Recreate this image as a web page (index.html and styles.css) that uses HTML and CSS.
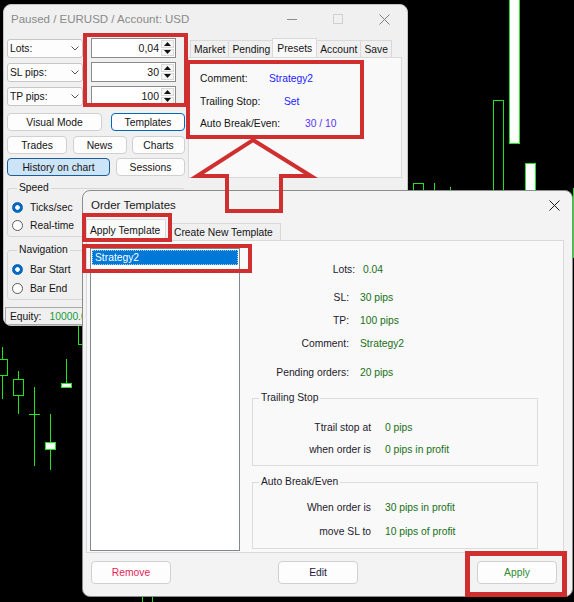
FILE: index.html
```html
<!DOCTYPE html>
<html lang="en">
<head>
<meta charset="utf-8">
<title>Order Templates</title>
<link rel="stylesheet" href="styles.css">
</head>
<body>
<div class="desktop">
  <svg class="chart" width="574" height="602" viewBox="0 0 574 602">
    <g stroke="#1ee61e" stroke-width="1" shape-rendering="crispEdges">
      <rect x="413.5" y="183.5" width="10" height="20" fill="#000"/>
      <line x1="434.5" y1="183" x2="434.5" y2="200"/>
      <line x1="450.5" y1="187" x2="450.5" y2="200"/>
      <rect x="493.5" y="100.5" width="10" height="100" fill="#000"/>
      <rect x="509.5" y="-2" width="10" height="145.5" fill="#fff"/>
      <rect x="525.5" y="163.5" width="10" height="40" fill="#fff"/>
      <line x1="573.5" y1="188" x2="573.5" y2="258"/>
      <line x1="2.5" y1="347" x2="2.5" y2="399"/>
      <rect x="-3.5" y="359.5" width="11" height="16" fill="#000"/>
      <line x1="18.5" y1="371" x2="18.5" y2="414"/>
      <rect x="13.5" y="379.5" width="10" height="16" fill="#000"/>
      <line x1="34.5" y1="387" x2="34.5" y2="466"/>
      <line x1="29" y1="414.5" x2="40" y2="414.5"/>
      <line x1="50.5" y1="414" x2="50.5" y2="470"/>
      <rect x="45.5" y="442.5" width="10" height="7" fill="#fff"/>
      <line x1="66.5" y1="359" x2="66.5" y2="385"/>
      <rect x="61.5" y="383.5" width="10" height="4" fill="#fff"/>
      <rect x="78.5" y="300" width="10" height="44.5" fill="#000"/>
      <line x1="142.5" y1="596" x2="142.5" y2="602"/>
      <line x1="152.5" y1="596" x2="152.5" y2="602"/>
    </g>
  </svg>

  <section class="win win-main">
    <header class="titlebar main-titlebar">
      <span class="title title-inactive">Paused / EURUSD / Account: USD</span>
      <span class="cap-btn"><svg width="10" height="10" viewBox="0 0 10 10"><line x1="0" y1="5.5" x2="10" y2="5.5" stroke="#8d8d8d"/></svg></span>
      <span class="cap-btn"><svg width="10" height="10" viewBox="0 0 10 10"><rect x="0.5" y="0.5" width="9" height="9" fill="none" stroke="#cfcfcf"/></svg></span>
      <span class="cap-btn"><svg width="11" height="11" viewBox="0 0 11 11"><path d="M0.5 0.5L10.5 10.5M10.5 0.5L0.5 10.5" stroke="#7d7d7d" fill="none"/></svg></span>
    </header>
    <div class="main-body">
      <div class="left-col">
        <div class="param-row">
          <div class="combo"><span>Lots:</span><svg class="chev" width="8" height="5" viewBox="0 0 8 5"><polyline points="0.5,0.5 4,4 7.5,0.5" fill="none" stroke="#555"/></svg></div>
          <div class="numeric"><span class="num-val">0,04</span><span class="spin"><span><svg width="7" height="4" viewBox="0 0 7 4"><polygon points="0,4 3.5,0 7,4" fill="#111"/></svg></span><span><svg width="7" height="4" viewBox="0 0 7 4"><polygon points="0,0 7,0 3.5,4" fill="#111"/></svg></span></span></div>
        </div>
        <div class="param-row">
          <div class="combo"><span>SL pips:</span><svg class="chev" width="8" height="5" viewBox="0 0 8 5"><polyline points="0.5,0.5 4,4 7.5,0.5" fill="none" stroke="#555"/></svg></div>
          <div class="numeric"><span class="num-val">30</span><span class="spin"><span><svg width="7" height="4" viewBox="0 0 7 4"><polygon points="0,4 3.5,0 7,4" fill="#111"/></svg></span><span><svg width="7" height="4" viewBox="0 0 7 4"><polygon points="0,0 7,0 3.5,4" fill="#111"/></svg></span></span></div>
        </div>
        <div class="param-row">
          <div class="combo"><span>TP pips:</span><svg class="chev" width="8" height="5" viewBox="0 0 8 5"><polyline points="0.5,0.5 4,4 7.5,0.5" fill="none" stroke="#555"/></svg></div>
          <div class="numeric"><span class="num-val">100</span><span class="spin"><span><svg width="7" height="4" viewBox="0 0 7 4"><polygon points="0,4 3.5,0 7,4" fill="#111"/></svg></span><span><svg width="7" height="4" viewBox="0 0 7 4"><polygon points="0,0 7,0 3.5,4" fill="#111"/></svg></span></span></div>
        </div>

        <div class="btn-row row-1">
          <button class="btn w-visual">Visual Mode</button>
          <button class="btn btn-focus w-templates">Templates</button>
        </div>
        <div class="btn-row row-2">
          <button class="btn w-trades">Trades</button>
          <button class="btn w-news">News</button>
          <button class="btn w-charts">Charts</button>
        </div>
        <div class="btn-row row-3">
          <button class="btn btn-pressed w-history">History on chart</button>
          <button class="btn w-sessions">Sessions</button>
        </div>

        <fieldset class="group group-speed">
          <legend>Speed</legend>
          <div class="radio-row"><span class="radio on"></span>Ticks/sec</div>
          <div class="radio-row"><span class="radio"></span>Real-time</div>
        </fieldset>
        <fieldset class="group group-nav">
          <legend>Navigation</legend>
          <div class="radio-row"><span class="radio on"></span>Bar Start</div>
          <div class="radio-row"><span class="radio"></span>Bar End</div>
        </fieldset>
        <div class="equity"><span>Equity:</span><span class="equity-val">10000.00</span></div>
      </div>

      <div class="right-col">
        <div class="tabs">
          <span class="tab">Market</span>
          <span class="tab">Pending</span>
          <span class="tab tab-sel">Presets</span>
          <span class="tab">Account</span>
          <span class="tab">Save</span>
        </div>
        <div class="tab-panel">
          <div class="preset-row"><span class="pl pl-comment">Comment:</span><span class="pv">Strategy2</span></div>
          <div class="preset-row"><span class="pl pl-trail">Trailing Stop:</span><span class="pv">Set</span></div>
          <div class="preset-row"><span class="pl pl-auto">Auto Break/Even:</span><span class="pv pv-purple">30 / 10</span></div>
        </div>
      </div>
    </div>
  </section>

  <section class="win win-dialog">
    <header class="titlebar dlg-titlebar">
      <span class="title title-active">Order Templates</span>
      <span class="dlg-close"><svg width="11" height="11" viewBox="0 0 11 11"><path d="M0.5 0.5L10.5 10.5M10.5 0.5L0.5 10.5" stroke="#1a1a1a" fill="none"/></svg></span>
    </header>
    <div class="dlg-tabs">
      <span class="dtab dtab-sel">Apply Template</span>
      <span class="dtab dtab-create">Create New Template</span>
    </div>
    <div class="dlg-page">
      <div class="tpl-list">
        <div class="tpl-item tpl-sel">Strategy2</div>
      </div>
      <div class="details">
        <div class="det-lots"><span class="dl">Lots:</span><span class="dv">0.04</span></div>
        <div class="det-row r-sl"><span class="dl">SL:</span><span class="dv">30 pips</span></div>
        <div class="det-row r-tp"><span class="dl">TP:</span><span class="dv">100 pips</span></div>
        <div class="det-row r-comment"><span class="dl">Comment:</span><span class="dv">Strategy2</span></div>
        <div class="det-row r-pending"><span class="dl">Pending orders:</span><span class="dv">20 pips</span></div>
        <fieldset class="dgroup g-trail">
          <legend>Trailing Stop</legend>
          <div class="grow"><span class="dl">Ttrail stop at</span><span class="dv">0 pips</span></div>
          <div class="grow"><span class="dl">when order is</span><span class="dv">0 pips in profit</span></div>
        </fieldset>
        <fieldset class="dgroup g-auto">
          <legend>Auto Break/Even</legend>
          <div class="grow"><span class="dl">When order is</span><span class="dv">30 pips in profit</span></div>
          <div class="grow"><span class="dl">move SL to</span><span class="dv">10 pips of profit</span></div>
        </fieldset>
      </div>
    </div>
    <div class="dlg-buttons">
      <button class="dbtn btn-remove">Remove</button>
      <button class="dbtn btn-edit">Edit</button>
      <button class="dbtn btn-apply">Apply</button>
    </div>
  </section>

  <div class="mark mark-params"></div>
  <div class="mark mark-presets"></div>
  <div class="mark mark-tab"></div>
  <div class="mark mark-list"></div>
  <div class="mark mark-apply"></div>
  <svg class="arrow-overlay" width="574" height="602" viewBox="0 0 574 602">
    <polygon points="253,140 311,176 281,176 281,211 227,211 227,176 197,176" fill="none" stroke="#cf2f2f" stroke-width="4" stroke-linejoin="miter"/>
  </svg>
</div>
</body>
</html>
```

FILE: styles.css
```css
* { box-sizing: border-box; }
html, body { margin: 0; padding: 0; }
body {
  background: #000;
  font-family: "Liberation Sans", Arial, sans-serif;
  font-size: 10.3px;
  color: #141414;
  white-space: nowrap;
}
button { font: inherit; color: inherit; padding: 0; margin: 0; cursor: default; white-space: nowrap; }
fieldset { min-width: 0; }

.desktop { position: relative; width: 574px; height: 602px; overflow: hidden; }
.chart { position: absolute; left: 0; top: 0; }

/* windows */
.win { position: absolute; display: flex; flex-direction: column; border-radius: 8px; overflow: hidden; }
.win-main { left: 3px; top: 4px; width: 405px; height: 322px; background: #f0f0f0; border: 1px solid #c4c4c4; }
.win-dialog { left: 82px; top: 190px; width: 491px; height: 407px; background: #f3f3f3; border: 1px solid #8c8c8c; }

.titlebar { flex: none; display: flex; align-items: center; }
.main-titlebar { height: 30px; padding-bottom: 2px; }
.title { flex: 1; font-size: 11.5px; white-space: nowrap; }
.title-inactive { color: #8a8a8a; padding-left: 7px; }
.title-active { color: #1a1a1a; padding-left: 8px; }
.cap-btn { width: 46px; display: flex; justify-content: center; align-items: center; }

.main-body { display: flex; gap: 3px; padding: 3px 0 0 3px; }
.left-col { width: 178px; flex: none; display: flex; flex-direction: column; }

.param-row { display: flex; gap: 8px; height: 20px; margin-bottom: 4px; align-items: center; }
.param-row:nth-child(3) { margin-bottom: 0; }
.combo {
  width: 76px; height: 19px; display: flex; align-items: center; justify-content: space-between;
  padding: 0 3px 0 2px; background: #fdfdfd; border: 1px solid #c6c6c6; border-radius: 3px;
}
.numeric {
  width: 85px; height: 20px; display: flex; background: #fff; border: 1px solid #8a8a8a;
}
.num-val { flex: 1; text-align: right; padding-right: 2px; line-height: 18px; font-size: 10.5px; }
.spin { width: 14px; display: flex; flex-direction: column; padding: 1px 1px 1px 0; gap: 1px; }
.spin > span {
  flex: 1; display: flex; align-items: center; justify-content: center;
  border: 1px solid #dadada; background: #f6f6f6;
}

.btn-row { display: flex; justify-content: space-between; }
.row-1 { margin-top: 7px; }
.row-2 { margin-top: 5px; }
.row-3 { margin-top: 4px; }
.btn {
  height: 18px; display: flex; align-items: center; justify-content: center;
  background: #fdfdfd; border: 1px solid #d0d0d0; border-radius: 4px;
}
.btn-focus { border-color: #0067c0; }
.btn-pressed { background: #cce4f7; border-color: #1e5c98; }
.w-visual { width: 95px; }
.w-templates { width: 74px; }
.w-trades { width: 60px; }
.w-news { width: 54px; }
.w-charts { width: 53px; }
.w-history { width: 103px; }
.w-sessions { width: 69px; }

.group { margin: 6px 0 0; padding: 6px 0 4px 4px; border: 1px solid #d6d6d6; border-radius: 3px; }
.group legend { margin-left: 5px; padding: 0 2px; line-height: 12px; }
.group-nav { margin-top: 7px; }
.radio-row { display: flex; align-items: center; gap: 7px; height: 14px; }
.group-speed .radio-row + .radio-row { margin-top: 4px; }
.group-nav .radio-row + .radio-row { margin-top: 5px; }
.radio { width: 11px; height: 11px; border-radius: 50%; border: 1px solid #5a5a5a; background: #fff; flex: none; }
.radio.on { border-color: #0067c0; background: radial-gradient(circle, #fff 0 2px, #0067c0 2.6px); }

.equity {
  margin: 7px 0 0 -2px; height: 18px; display: flex; align-items: center; gap: 8px;
  padding-left: 4px; border: 1px solid #a8a8a8; border-right: none;
}
.equity-val { color: #179a3b; }

.right-col { width: 214px; flex: none; display: flex; flex-direction: column; }
.tabs { display: flex; align-items: flex-end; height: 19px; padding-left: 2px; }
.tab {
  height: 17px; padding: 0 3px; display: flex; align-items: center;
  border: 1px solid #d9d9d9; border-bottom: none; background: #f0f0f0; margin-right: -1px;
}
.tab-sel { height: 19px; background: #f9f9f9; padding: 0 4px; margin-left: -1px; position: relative; z-index: 1; }
.tab-panel { height: 121px; background: #f9f9f9; border: 1px solid #d9d9d9; padding: 13px 0 0 11px; }
.preset-row { display: flex; height: 14px; align-items: center; }
.preset-row:nth-child(2) { margin-top: 9px; }
.preset-row:nth-child(3) { margin-top: 8px; }
.pl { flex: none; }
.pl-comment { width: 69px; }
.pl-trail { width: 84px; }
.pl-auto { width: 105px; }
.pv { color: #2323ff; }
.pv-purple { color: #5a32ff; }

/* dialog */
.dlg-titlebar { height: 28px; }
.dlg-close { width: 11px; height: 11px; margin-right: 12px; display: flex; }
.dlg-tabs { display: flex; align-items: flex-end; height: 21px; padding-left: 3px; gap: 4px; }
.dtab {
  height: 17px; display: flex; align-items: center; padding: 0 3px;
  border: 1px solid #d9d9d9; border-bottom: none; background: #f0f0f0; white-space: nowrap; flex: none;
}
.dtab-sel { height: 21px; width: 80px; background: #fafafa; }
.dtab-create { width: 111px; }

.dlg-page {
  margin: 0 8px 0 3px; height: 313px; background: #f9f9f9; border: 1px solid #d9d9d9;
  display: flex; gap: 12px; padding: 7px 0 0 3px;
}
.tpl-list { width: 150px; height: 303px; background: #fff; border: 1px solid #828790; padding: 1px; flex: none; }
.tpl-item { height: 15px; line-height: 13px; padding-left: 2px; }
.tpl-sel { background: #0078d7; color: #fff; border: 1px dotted #9fcdf5; }

.details { width: 286px; flex: none; display: flex; flex-direction: column; }
.dl { color: #1e1a2c; text-align: right; flex: none; }
.dv { color: #187018; }
.det-lots { margin-top: 14px; display: flex; height: 14px; align-items: center; }
.det-lots .dl { width: 103px; }
.det-lots .dv { margin-left: 8px; }
.det-row { display: flex; height: 14px; align-items: center; }
.det-row .dl { width: 97px; }
.det-row .dv { margin-left: 11px; }
.r-sl { margin-top: 14px; }
.r-tp { margin-top: 9px; }
.r-comment { margin-top: 9px; }
.r-pending { margin-top: 15px; }

.dgroup { margin: 0; border: 1px solid #dcdcdc; }
.dgroup legend { margin-left: 6px; padding: 0 2px; line-height: 12px; color: #1e1a2c; }
.g-trail { margin-top: 13px; padding: 16px 0 9px; }
.g-auto { margin-top: 10px; padding: 12px 0 10px; }
.grow { display: flex; height: 14px; align-items: center; }
.grow .dl { width: 118px; }
.grow .dv { margin-left: 14px; }
.g-trail .grow + .grow { margin-top: 8px; }
.g-auto .grow + .grow { margin-top: 10px; }

.dlg-buttons { display: flex; justify-content: space-between; margin-top: 8px; padding: 0 15px 0 8px; }
.dbtn {
  width: 80px; height: 23px; background: #fdfdfd; border: 1px solid #d0d0d0; border-radius: 4px;
  display: flex; align-items: center; justify-content: center;
}
.btn-remove { color: #e8245a; }
.btn-edit { color: #1a1a40; margin-right: 12px; }
.btn-apply { color: #2e8b2e; }

/* annotations */
.mark { position: absolute; border: 4px solid #cf2f2f; pointer-events: none; }
.mark-params { left: 83px; top: 33px; width: 105px; height: 74px; }
.mark-presets { left: 186px; top: 60px; width: 178px; height: 79px; }
.mark-tab { left: 82px; top: 213px; width: 90px; height: 29px; }
.mark-list { left: 82px; top: 244px; width: 170px; height: 29px; }
.mark-apply { left: 465px; top: 551px; width: 102px; height: 46px; border-width: 5px; }
.arrow-overlay { position: absolute; left: 0; top: 0; pointer-events: none; }
```
